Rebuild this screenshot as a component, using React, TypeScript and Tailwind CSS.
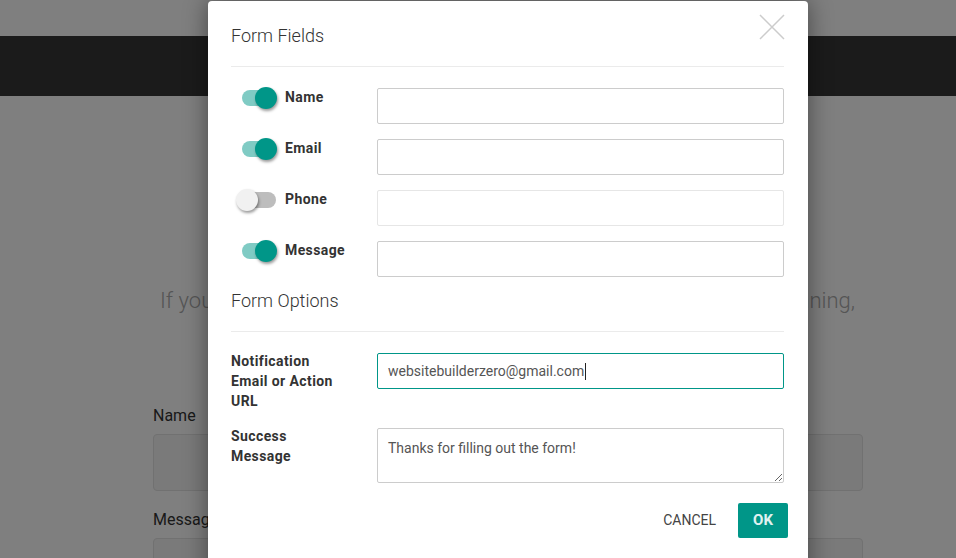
import { useState } from "react";

const fields = [
  { label: "Name", on: true },
  { label: "Email", on: true },
  { label: "Phone", on: false },
  { label: "Message", on: true },
];

export default function App() {
  const [state, setState] = useState(fields.map((f) => f.on));

  return (
    <div className="relative h-[558px] w-[956px] overflow-hidden bg-white font-['Roboto',sans-serif]">
      {/* page behind the dialog */}
      <div className="h-9" />
      <div className="h-[60px] bg-[#363636]" />
      <div className="pl-[160px] pt-[188px]">
        <div className="flex w-[695px] justify-between text-[22px] font-light text-[#aaaaaa]">
          <span>If you would like to reach us</span>
          <span>about anything at all or planning,</span>
        </div>
      </div>
      <div className="px-[153px] pt-[87px]">
        <div className="w-[710px] text-[16px] text-[#333]">Name</div>
        <div className="mt-[6px] h-[57px] w-[710px] rounded border border-[#e2e2e2] bg-[#f4f4f4]" />
        <div className="mt-[17px] text-[16px] text-[#333]">Message</div>
        <div className="mt-[6px] h-[57px] w-[710px] rounded border border-[#e2e2e2] bg-[#f4f4f4]" />
      </div>

      {/* overlay */}
      <div className="absolute inset-0 bg-black/50" />

      {/* dialog */}
      <div className="absolute left-[208px] top-[1px] h-[600px] w-[600px] rounded-t bg-white shadow-[0_0_24px_rgba(0,0,0,0.45)]">
        <div className="px-[23px] pr-[24px]">
          <div className="flex h-[66px] items-center justify-between border-b border-[#ebebeb]">
            <h2 className="pt-[4px] text-[18px] font-light text-[#333]">Form Fields</h2>
            <svg width="26" height="26" viewBox="0 0 26 26" className="mb-[13px] mr-[-1px]">
              <path d="M1 1 L25 25 M25 1 L1 25" stroke="#cccccc" strokeWidth="1.5" />
            </svg>
          </div>

          <div className="flex flex-col gap-[15px] pt-[21px]">
            {fields.map((f, i) => (
              <div key={f.label} className="flex items-start">
                <div className="mt-[-1px] flex w-[146px] items-center">
                  <button
                    onClick={() => setState((s) => s.map((v, j) => (j === i ? !v : v)))}
                    className="relative ml-[11px] h-[16px] w-[34px] rounded-full"
                    style={{ background: state[i] ? "#80cbc4" : "#bdbdbd" }}
                  >
                    <span
                      className="absolute top-[-3px] h-[22px] w-[22px] rounded-full shadow-[1px_2px_3px_rgba(0,0,0,0.4)]"
                      style={{ left: state[i] ? 13 : -6, background: state[i] ? "#009688" : "#f1f1f1" }}
                    />
                  </button>
                  <span className="ml-[9px] text-[14px] font-bold tracking-[0.4px] text-[#333]">{f.label}</span>
                </div>
                <input
                  disabled={!state[i]}
                  className={
                    "h-[36px] w-[407px] rounded-[2px] border bg-white px-[10px] text-[14px] outline-none " +
                    (state[i] ? "border-[#cccccc]" : "border-[#e6e6e6]")
                  }
                />
              </div>
            ))}
          </div>

          <div className="flex h-[55px] items-end border-b border-[#ebebeb] pb-[17px]">
            <h2 className="text-[18px] font-light text-[#333]">Form Options</h2>
          </div>

          <div className="flex items-start pt-[21px]">
            <div className="mt-[-2px] w-[146px] text-[14px] font-bold leading-[20px] tracking-[0.4px] text-[#333]">
              Notification
              <br />
              Email or Action
              <br />
              URL
            </div>
            <div className="flex h-[36px] w-[407px] items-center rounded-[2px] border border-[#009688] bg-white px-[10px] text-[14px] text-[#555]">
              websitebuilderzero@gmail.com
              <span className="ml-[1px] h-[17px] w-px bg-[#222]" />
            </div>
          </div>

          <div className="mt-[17px] flex items-start">
            <div className="mt-[-2px] w-[146px] text-[14px] font-bold leading-[20px] tracking-[0.4px] text-[#333]">
              Success
              <br />
              Message
            </div>
            <textarea
              defaultValue="Thanks for filling out the form!"
              className="h-[55px] w-[407px] rounded-[2px] border border-[#cccccc] bg-white px-[10px] py-[9px] text-[14px] leading-[20px] text-[#555] outline-none"
            />
          </div>
        </div>

        <div className="flex items-center justify-end gap-[22px] pr-[20px] pt-[20px]">
          <button className="text-[14px] text-[#444]">CANCEL</button>
          <button className="h-[35px] w-[50px] rounded-[2px] bg-[#009688] text-[15px] font-bold text-[#e0f2f1]">OK</button>
        </div>
      </div>
    </div>
  );
}
